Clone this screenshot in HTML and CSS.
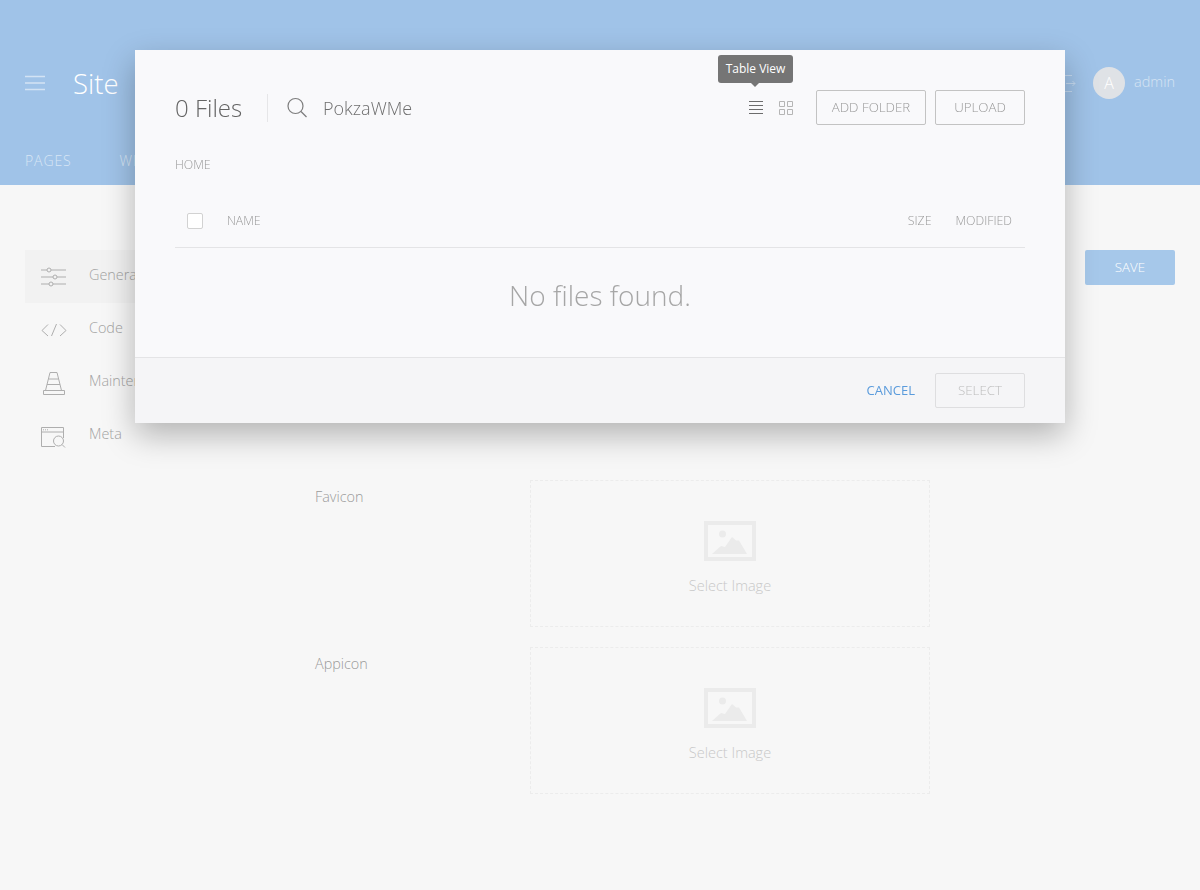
FILE: index.html
```html
<!DOCTYPE html>
<html>
  <head>
    <meta name="viewport" content="width=device-width, initial-scale=1" />
    <title>Site</title>
    <link rel="stylesheet" href="styles.css">
  </head>
  <body>
    <header class="topbar">
      <div class="topbar-row">
        <svg class="burger" width="20" height="16" viewBox="0 0 20 16"><path d="M0 1.500h20M0 8h20M0 14.500h20" stroke="#d3e3f4" stroke-width="1.300" fill="none"/></svg>
        <div class="site-title">Site</div>
        <div class="user">
          <svg class="logout" width="22" height="17" viewBox="0 0 22 17"><path d="M0 .5h18M18 16.500H0M12 8.500h9M18.500 6l2.500 2.500-2.500 2.500" stroke="#c5daf0" fill="none"/></svg>
          <div class="avatar">A</div>
          <span class="user-name">admin</span>
        </div>
      </div>
      <nav class="tabs">
        <a class="tab">PAGES</a>
        <a class="tab">WIDGETS</a>
      </nav>
    </header>

    <div class="page">
      <aside class="sidebar">
        <div class="side-item active">
          <svg class="side-icon" width="25" height="20" viewBox="0 0 25 20"><g stroke="#aeaeae" fill="none"><path d="M0 3h6M10 3h15M0 10h12M16 10h9M0 17h8M12 17h13"/><circle cx="8" cy="3" r="2"/><circle cx="14" cy="10" r="2"/><circle cx="10" cy="17" r="2"/></g></svg>
          <span>General</span>
        </div>
        <div class="side-item">
          <svg class="side-icon" width="26" height="14" viewBox="0 0 26 14"><path d="M7 1.500L1 7.500l6 5.500M19 1.500l6 6-6 5.500M15.500 1l-5 12" stroke="#aeaeae" fill="none"/></svg>
          <span>Code</span>
        </div>
        <div class="side-item">
          <svg class="side-icon" width="26" height="24" viewBox="0 0 26 24"><g stroke="#aeaeae" fill="none"><path d="M2.500 19.500h21v4h-21zM4.500 19.500L9 1.500h7l4.500 18M7.500 8h10M6 13.500h13"/></g></svg>
          <span>Maintenance</span>
        </div>
        <div class="side-item">
          <svg class="side-icon" width="26" height="24" viewBox="0 0 26 24"><g stroke="#aeaeae" fill="none"><path d="M22.500 14V3.500H.5v19H14M.5 8h22"/><circle cx="17.500" cy="17" r="5"/><path d="M21 20.500l3 3"/><path d="M2 5.800h1M4 5.800h1M6 5.800h1"/></g></svg>
          <span>Meta</span>
        </div>
      </aside>

      <main class="form">
        <div class="form-row">
          <label class="form-label">Favicon</label>
          <div class="dropzone">
            <svg width="52" height="40" viewBox="0 0 52 40"><path d="M0 0h52v40H0zM4 4v32h44V4z" fill="#ebebeb" fill-rule="evenodd"/><circle cx="18.500" cy="13" r="3.500" fill="#ebebeb"/><path d="M8 33l9-8 4 1 7-10 4 3.500 3 0 8 13.500z" fill="#ebebeb"/></svg>
            <span class="dropzone-text">Select Image</span>
          </div>
        </div>
        <div class="form-row">
          <label class="form-label">Appicon</label>
          <div class="dropzone">
            <svg width="52" height="40" viewBox="0 0 52 40"><path d="M0 0h52v40H0zM4 4v32h44V4z" fill="#ebebeb" fill-rule="evenodd"/><circle cx="18.500" cy="13" r="3.500" fill="#ebebeb"/><path d="M8 33l9-8 4 1 7-10 4 3.500 3 0 8 13.500z" fill="#ebebeb"/></svg>
            <span class="dropzone-text">Select Image</span>
          </div>
        </div>
      </main>

      <button class="save-btn" type="button">SAVE</button>
    </div>

    <div class="modal">
      <div class="tooltip">Table View</div>
      <div class="modal-body">
        <div class="modal-head">
          <div class="file-count">0 Files</div>
          <svg class="search-icon" width="22" height="22" viewBox="0 0 22 22"><g stroke="#7d7d7d" stroke-width="1.200" fill="none"><circle cx="9.500" cy="9" r="7.500"/><path d="M15 14.500l5.500 5.500"/></g></svg>
          <div class="search-text">PokzaWMe</div>
          <svg class="view-icon" width="14" height="14" viewBox="0 0 14 14"><path d="M0 .5h14M0 4.500h14M0 8.500h14M0 12.500h14" stroke="#6c6c6c" fill="none"/></svg>
          <svg class="view-icon" width="14" height="14" viewBox="0 0 14 14"><path d="M.5.500h5v5h-5zM8.500.500h5v5h-5zM.5 8.500h5v5h-5zM8.500 8.500h5v5h-5z" stroke="#b5b5b5" fill="none"/></svg>
          <button class="btn add-folder" type="button">ADD FOLDER</button>
          <button class="btn" type="button">UPLOAD</button>
        </div>
        <div class="crumbs">HOME</div>
        <div class="table-head">
          <span class="checkbox"></span>
          <span class="col-name">NAME</span>
          <span class="col-size">SIZE</span>
          <span class="col-modified">MODIFIED</span>
        </div>
        <div class="no-files">No files found.</div>
      </div>
      <div class="modal-foot">
        <a class="cancel">CANCEL</a>
        <button class="btn btn-disabled" type="button">SELECT</button>
      </div>
    </div>
  </body>
</html>
```

FILE: styles.css
```css
* {
  box-sizing: border-box;
}

html,
body {
  height: 100%;
}

body {
  margin: 0;
  background: #f7f7f7;
  font-family: "Open Sans", "Liberation Sans", sans-serif;
  font-weight: 300;
  overflow: hidden;
}

.topbar {
  height: 185px;
  background: #a0c3e8;
  padding: 67px 25px 0;
}

.topbar-row {
  display: flex;
  align-items: center;
  height: 32px;
}

.burger {
  margin-right: 28px;
}

.site-title {
  color: #fff;
  font-size: 27.500px;
  font-weight: 300;
}

.user {
  margin-left: auto;
  display: flex;
  align-items: center;
}

.logout {
  margin-right: 17px;
}

.avatar {
  width: 32px;
  height: 32px;
  border-radius: 50%;
  background: #dfe2e6;
  color: #fff;
  font-size: 16px;
  line-height: 32px;
  text-align: center;
  margin-right: 9px;
}

.user-name {
  color: #d6e4f3;
  font-size: 14.500px;
  padding-bottom: 3px;
}

.tabs {
  display: flex;
  gap: 48px;
  margin-top: 52px;
}

.tab {
  color: #d8e6f5;
  font-size: 14px;
  letter-spacing: 0.9px;
}

.page {
  display: flex;
  align-items: flex-start;
  padding: 65px 25px 0;
}

.sidebar {
  width: 290px;
  flex: none;
}

.side-item {
  display: flex;
  align-items: center;
  height: 53px;
  color: #a3a3a3;
  font-size: 14.400px;
  padding-left: 16px;
  position: relative;
}

.side-item.active {
  background: #f2f2f2;
}

.side-icon {
  position: absolute;
  left: 16px;
  top: 50%;
  transform: translateY(-50%);
}

.side-item span {
  margin-left: 48px;
  padding-bottom: 4px;
}

.form {
  width: 615px;
  padding-top: 230px;
}

.form-row {
  display: flex;
  margin-bottom: 20px;
}

.form-label {
  width: 215px;
  flex: none;
  color: #9a9a9a;
  font-size: 14.400px;
  padding-top: 7px;
}

.dropzone {
  width: 400px;
  height: 147px;
  border: 1px dashed #ececec;
  display: flex;
  flex-direction: column;
  align-items: center;
  padding-top: 40px;
}

.dropzone-text {
  color: #c8c8c8;
  font-size: 14.500px;
  margin-top: 15px;
}

.save-btn {
  margin-left: auto;
  width: 90px;
  height: 35px;
  background: #a6c8ea;
  border: 0;
  border-radius: 2px;
  color: #fff;
  font-family: inherit;
  font-size: 13.300px;
  font-weight: 300;
  padding: 0 0 2px;
}

/* file manager dialog, sits over the page */
.modal {
  position: fixed;
  left: 135px;
  top: 50px;
  width: 930px;
  height: 373px;
  background: #f9f9fb;
  box-shadow: 0 12px 30px rgba(0, 0, 0, 0.28);
  display: flex;
  flex-direction: column;
}

.tooltip {
  position: absolute;
  left: 583px;
  top: 5px;
  width: 75px;
  height: 28px;
  background: #757575;
  border-radius: 3px;
  color: #fff;
  font-size: 12px;
  font-weight: 400;
  line-height: 28px;
  text-align: center;
}

.tooltip::after {
  content: "";
  position: absolute;
  left: 33px;
  top: 28px;
  border: 4px solid transparent;
  border-top-color: #757575;
  border-bottom: 0;
}

.modal-body {
  flex: 1;
  padding: 40px 40px 0;
}

.modal-head {
  display: flex;
  align-items: center;
  height: 35px;
}

.file-count {
  color: #636363;
  font-size: 24px;
  font-weight: 300;
  width: 93px;
  height: 28px;
  line-height: 28px;
  border-right: 1px solid #e6e6e8;
}

.search-icon {
  margin-left: 18px;
}

.search-text {
  color: #6e6e6e;
  font-size: 18px;
  font-weight: 300;
  margin-left: 15px;
  flex: 1;
}

.view-icon {
  margin-right: 16px;
}

.view-icon + .btn {
  margin-left: 7px;
}

.btn {
  height: 35px;
  width: 90px;
  background: transparent;
  border: 1px solid #c3c3c3;
  border-radius: 2px;
  color: #999;
  font-family: inherit;
  font-size: 13.300px;
  font-weight: 300;
  padding: 0 0 2px;
}

.add-folder {
  width: 110px;
  margin-right: 9px;
}

.btn-disabled {
  border-color: #dedee0;
  color: #bdbdbd;
}

.crumbs {
  color: #999;
  font-size: 12.300px;
  margin-top: 31px;
  line-height: 18px;
}

.table-head {
  display: flex;
  align-items: center;
  height: 56px;
  margin-top: 18px;
  padding: 2px 13px 0 12px;
  border-bottom: 1px solid #e4e4e6;
  color: #999;
  font-size: 12.300px;
}

.checkbox {
  width: 16px;
  height: 16px;
  background: #fff;
  border: 1px solid #d2d2d2;
  border-radius: 2px;
  margin-right: 24px;
}

.col-name {
  flex: 1;
}

.col-size {
  margin-right: 24px;
}

.no-files {
  color: #a6a6a6;
  font-size: 28px;
  font-weight: 300;
  text-align: center;
  margin-top: 28px;
}

.modal-foot {
  display: flex;
  align-items: center;
  justify-content: flex-end;
  height: 66px;
  background: #f5f5f7;
  border-top: 1px solid #e4e4e6;
  padding: 0 40px;
}

.cancel {
  color: #5a9bdc;
  font-size: 13px;
  font-weight: 400;
  margin-right: 20px;
  padding-bottom: 2px;
}
```
